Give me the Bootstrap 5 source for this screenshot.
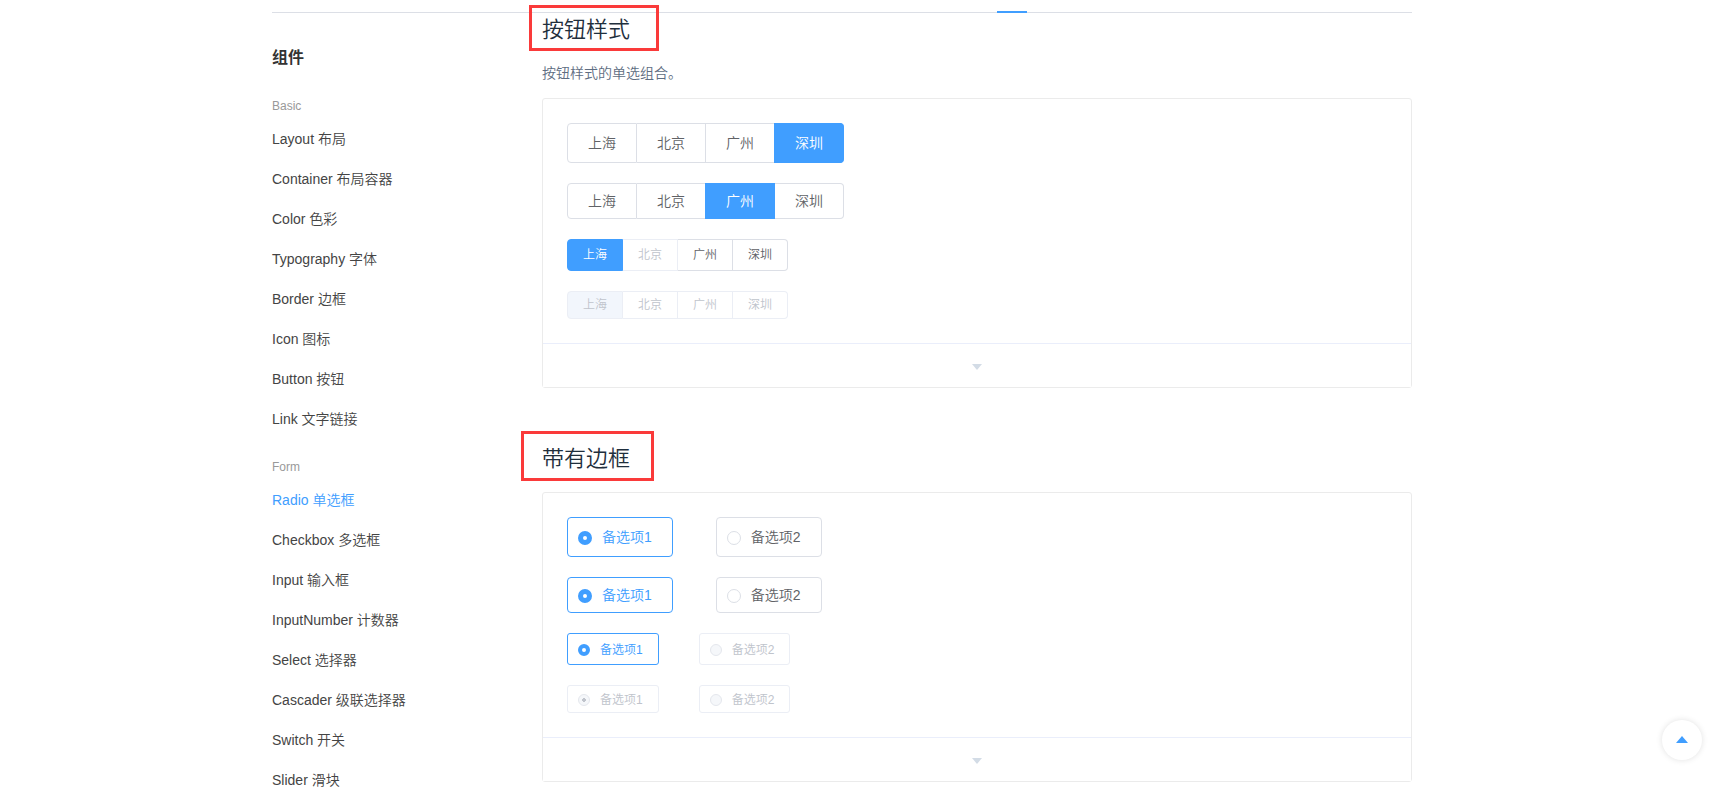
<!DOCTYPE html>
<html lang="zh-CN">
<head>
<meta charset="utf-8">
<meta name="viewport" content="width=device-width, initial-scale=1">
<title>Radio 单选框</title>
<link href="https://cdn.jsdelivr.net/npm/bootstrap@5.3.0/dist/css/bootstrap.min.css" rel="stylesheet">
<style>
:root { --blue: #409eff; --line: #dcdfe6; --soft: #ebeef5; --muted: #c0c4cc; --ink: #606266; }
body { font-family: "Liberation Sans", "Noto Sans CJK SC", sans-serif; font-size: 14px; font-weight: 350; line-height: 20px; color: var(--ink); background: #fff; }
.page { padding-right: 43px; }
.wrap { max-width: 1140px; }
.topline { height: 13px; border-bottom: 1px solid var(--line); }
.tab-mark { width: 30px; height: 2px; margin: 0 385px -1px 0; background: var(--blue); }
.columns { padding-top: 1px; }
.side { width: 270px; padding-top: 24px; }
.side a { display: block; line-height: 40px; color: #444; text-decoration: none; }
.side a.current, .side a:hover { color: var(--blue); }
.side a.side-head { font-size: 16px; font-weight: 700; color: #333; }
.side-group { margin: 15px 0 0; font-size: 12px; line-height: 26px; color: #999; }
.title { font-size: 22px; line-height: 32px; font-weight: 350; color: #1f2f3d; margin: 0 0 17px; }
.demo-section + .demo-section { margin-top: 55px; }
.intro { color: #5e6d82; margin: 0 0 15px; }
.callout { position: absolute; border: 3px solid #fa3a3a; pointer-events: none; }
.callout-a { left: -13px; top: -9px; width: 130px; height: 46px; }
.callout-b { left: -21px; top: -12px; width: 133px; height: 50px; }
.demo { border: 1px solid #ebebeb; border-radius: 3px; }
.demo-body { padding: 24px; gap: 20px; }
.demo-toggle { height: 44px; padding: 2px 0 0; border: 0; border-top: 1px solid #eaeefb; background: #fff; }
/* segmented radio buttons */
.seg label { height: 40px; padding: 0 20px; border: 1px solid var(--line); border-left: 0; background: #fff; cursor: pointer; }
.seg label:first-of-type { border-left: 1px solid var(--line); border-radius: 4px 0 0 4px; }
.seg label:last-of-type { border-radius: 0 4px 4px 0; }
.seg input:checked + label { color: #fff; background: var(--blue); border-color: var(--blue); box-shadow: -1px 0 0 0 var(--blue); }
.seg input:checked + label:first-of-type { box-shadow: none; }
.seg input:disabled + label { color: var(--muted); border-color: var(--soft); }
.seg input:disabled:checked + label { background: #f2f6fc; box-shadow: none; }
.seg.size-m label { height: 36px; }
.seg.size-s label { height: 32px; padding: 0 15px; font-size: 12px; }
.seg.size-xs label { height: 28px; padding: 0 15px; font-size: 12px; }
/* bordered radios */
.boxed { gap: 43px; }
.boxed label { height: 40px; padding: 0 20px 0 10px; gap: 10px; border: 1px solid var(--line); border-radius: 4px; cursor: pointer; }
.boxed input { appearance: none; width: 14px; height: 14px; margin: 2px 0 0; border: 1px solid var(--line); border-radius: 50%; background: #fff; }
.boxed input:checked { border: 5px solid var(--blue); }
.boxed label:has(:checked) { color: var(--blue); border-color: var(--blue); }
.boxed input:disabled { border: 1px solid #e4e7ed; background: #f5f7fa; }
.boxed input:disabled:checked { background: radial-gradient(circle, var(--muted) 2px, #f5f7fa 2px); }
.boxed label:has(:disabled) { color: var(--muted); border-color: var(--soft); }
.boxed.size-m label { height: 36px; }
.boxed.size-s, .boxed.size-xs { gap: 40px; }
.boxed.size-s label, .boxed.size-xs label { height: 32px; padding: 2px 15px 0 10px; font-size: 12px; border-radius: 3px; }
.boxed.size-xs label { height: 28px; }
.boxed.size-s input, .boxed.size-xs input { width: 12px; height: 12px; margin: 0; }
.boxed.size-s input:checked:enabled { border-width: 4px; }
.to-top { right: 25px; bottom: 48px; width: 40px; height: 40px; border: 0; background: #fff; box-shadow: 0 0 6px rgba(0,0,0,.12); }
</style>
</head>
<body>
<div class="page">
<div class="wrap mx-auto">
  <header class="topline d-flex justify-content-end align-items-end"><span class="tab-mark"></span></header>
  <div class="columns d-flex">
    <nav class="side flex-shrink-0" aria-label="组件">
      <a class="side-head" href="#">组件</a>
      <p class="side-group">Basic</p>
      <a href="#">Layout 布局</a>
      <a href="#">Container 布局容器</a>
      <a href="#">Color 色彩</a>
      <a href="#">Typography 字体</a>
      <a href="#">Border 边框</a>
      <a href="#">Icon 图标</a>
      <a href="#">Button 按钮</a>
      <a href="#">Link 文字链接</a>
      <p class="side-group">Form</p>
      <a class="current" href="#">Radio 单选框</a>
      <a href="#">Checkbox 多选框</a>
      <a href="#">Input 输入框</a>
      <a href="#">InputNumber 计数器</a>
      <a href="#">Select 选择器</a>
      <a href="#">Cascader 级联选择器</a>
      <a href="#">Switch 开关</a>
      <a href="#">Slider 滑块</a>
    </nav>
    <main class="flex-grow-1">
      <section class="demo-section">
        <h3 class="title position-relative">按钮样式<span class="callout callout-a"></span></h3>
        <p class="intro">按钮样式的单选组合。</p>
        <div class="demo">
          <div class="demo-body d-flex flex-column align-items-start">
            <div class="seg d-flex" role="radiogroup">
              <input class="btn-check" type="radio" name="s1" id="s1a"><label class="d-flex align-items-center" for="s1a">上海</label>
              <input class="btn-check" type="radio" name="s1" id="s1b"><label class="d-flex align-items-center" for="s1b">北京</label>
              <input class="btn-check" type="radio" name="s1" id="s1c"><label class="d-flex align-items-center" for="s1c">广州</label>
              <input class="btn-check" type="radio" name="s1" id="s1d" checked><label class="d-flex align-items-center" for="s1d">深圳</label>
            </div>
            <div class="seg size-m d-flex" role="radiogroup">
              <input class="btn-check" type="radio" name="s2" id="s2a"><label class="d-flex align-items-center" for="s2a">上海</label>
              <input class="btn-check" type="radio" name="s2" id="s2b"><label class="d-flex align-items-center" for="s2b">北京</label>
              <input class="btn-check" type="radio" name="s2" id="s2c" checked><label class="d-flex align-items-center" for="s2c">广州</label>
              <input class="btn-check" type="radio" name="s2" id="s2d"><label class="d-flex align-items-center" for="s2d">深圳</label>
            </div>
            <div class="seg size-s d-flex" role="radiogroup">
              <input class="btn-check" type="radio" name="s3" id="s3a" checked><label class="d-flex align-items-center" for="s3a">上海</label>
              <input class="btn-check" type="radio" name="s3" id="s3b" disabled><label class="d-flex align-items-center" for="s3b">北京</label>
              <input class="btn-check" type="radio" name="s3" id="s3c"><label class="d-flex align-items-center" for="s3c">广州</label>
              <input class="btn-check" type="radio" name="s3" id="s3d"><label class="d-flex align-items-center" for="s3d">深圳</label>
            </div>
            <div class="seg size-xs d-flex" role="radiogroup">
              <input class="btn-check" type="radio" name="s4" id="s4a" checked disabled><label class="d-flex align-items-center" for="s4a">上海</label>
              <input class="btn-check" type="radio" name="s4" id="s4b" disabled><label class="d-flex align-items-center" for="s4b">北京</label>
              <input class="btn-check" type="radio" name="s4" id="s4c" disabled><label class="d-flex align-items-center" for="s4c">广州</label>
              <input class="btn-check" type="radio" name="s4" id="s4d" disabled><label class="d-flex align-items-center" for="s4d">深圳</label>
            </div>
          </div>
          <button class="demo-toggle w-100 d-flex align-items-center justify-content-center" type="button" aria-label="展开代码"><svg width="10" height="6" viewBox="0 0 10 6" fill="#d3dce6"><path d="M0 0h10L5 6z"/></svg></button>
        </div>
      </section>
      <section class="demo-section">
        <h3 class="title position-relative">带有边框<span class="callout callout-b"></span></h3>
        <div class="demo">
          <div class="demo-body d-flex flex-column align-items-start">
            <div class="boxed d-flex" role="radiogroup">
              <label class="d-flex align-items-center"><input type="radio" name="b1" checked>备选项1</label>
              <label class="d-flex align-items-center"><input type="radio" name="b1">备选项2</label>
            </div>
            <div class="boxed size-m d-flex" role="radiogroup">
              <label class="d-flex align-items-center"><input type="radio" name="b2" checked>备选项1</label>
              <label class="d-flex align-items-center"><input type="radio" name="b2">备选项2</label>
            </div>
            <div class="boxed size-s d-flex" role="radiogroup">
              <label class="d-flex align-items-center"><input type="radio" name="b3" checked>备选项1</label>
              <label class="d-flex align-items-center"><input type="radio" name="b3" disabled>备选项2</label>
            </div>
            <div class="boxed size-xs d-flex" role="radiogroup">
              <label class="d-flex align-items-center"><input type="radio" name="b4" checked disabled>备选项1</label>
              <label class="d-flex align-items-center"><input type="radio" name="b4" disabled>备选项2</label>
            </div>
          </div>
          <button class="demo-toggle w-100 d-flex align-items-center justify-content-center" type="button" aria-label="展开代码"><svg width="10" height="6" viewBox="0 0 10 6" fill="#d3dce6"><path d="M0 0h10L5 6z"/></svg></button>
        </div>
      </section>
    </main>
  </div>
</div>
</div>
<button class="to-top position-fixed rounded-circle d-flex align-items-center justify-content-center p-0" type="button" aria-label="回到顶部"><svg width="12" height="8" viewBox="0 0 12 8" fill="#409eff"><path d="M6 0l6 7H0z"/></svg></button>
<script src="https://cdn.jsdelivr.net/npm/bootstrap@5.3.0/dist/js/bootstrap.bundle.min.js"></script>
</body>
</html>
